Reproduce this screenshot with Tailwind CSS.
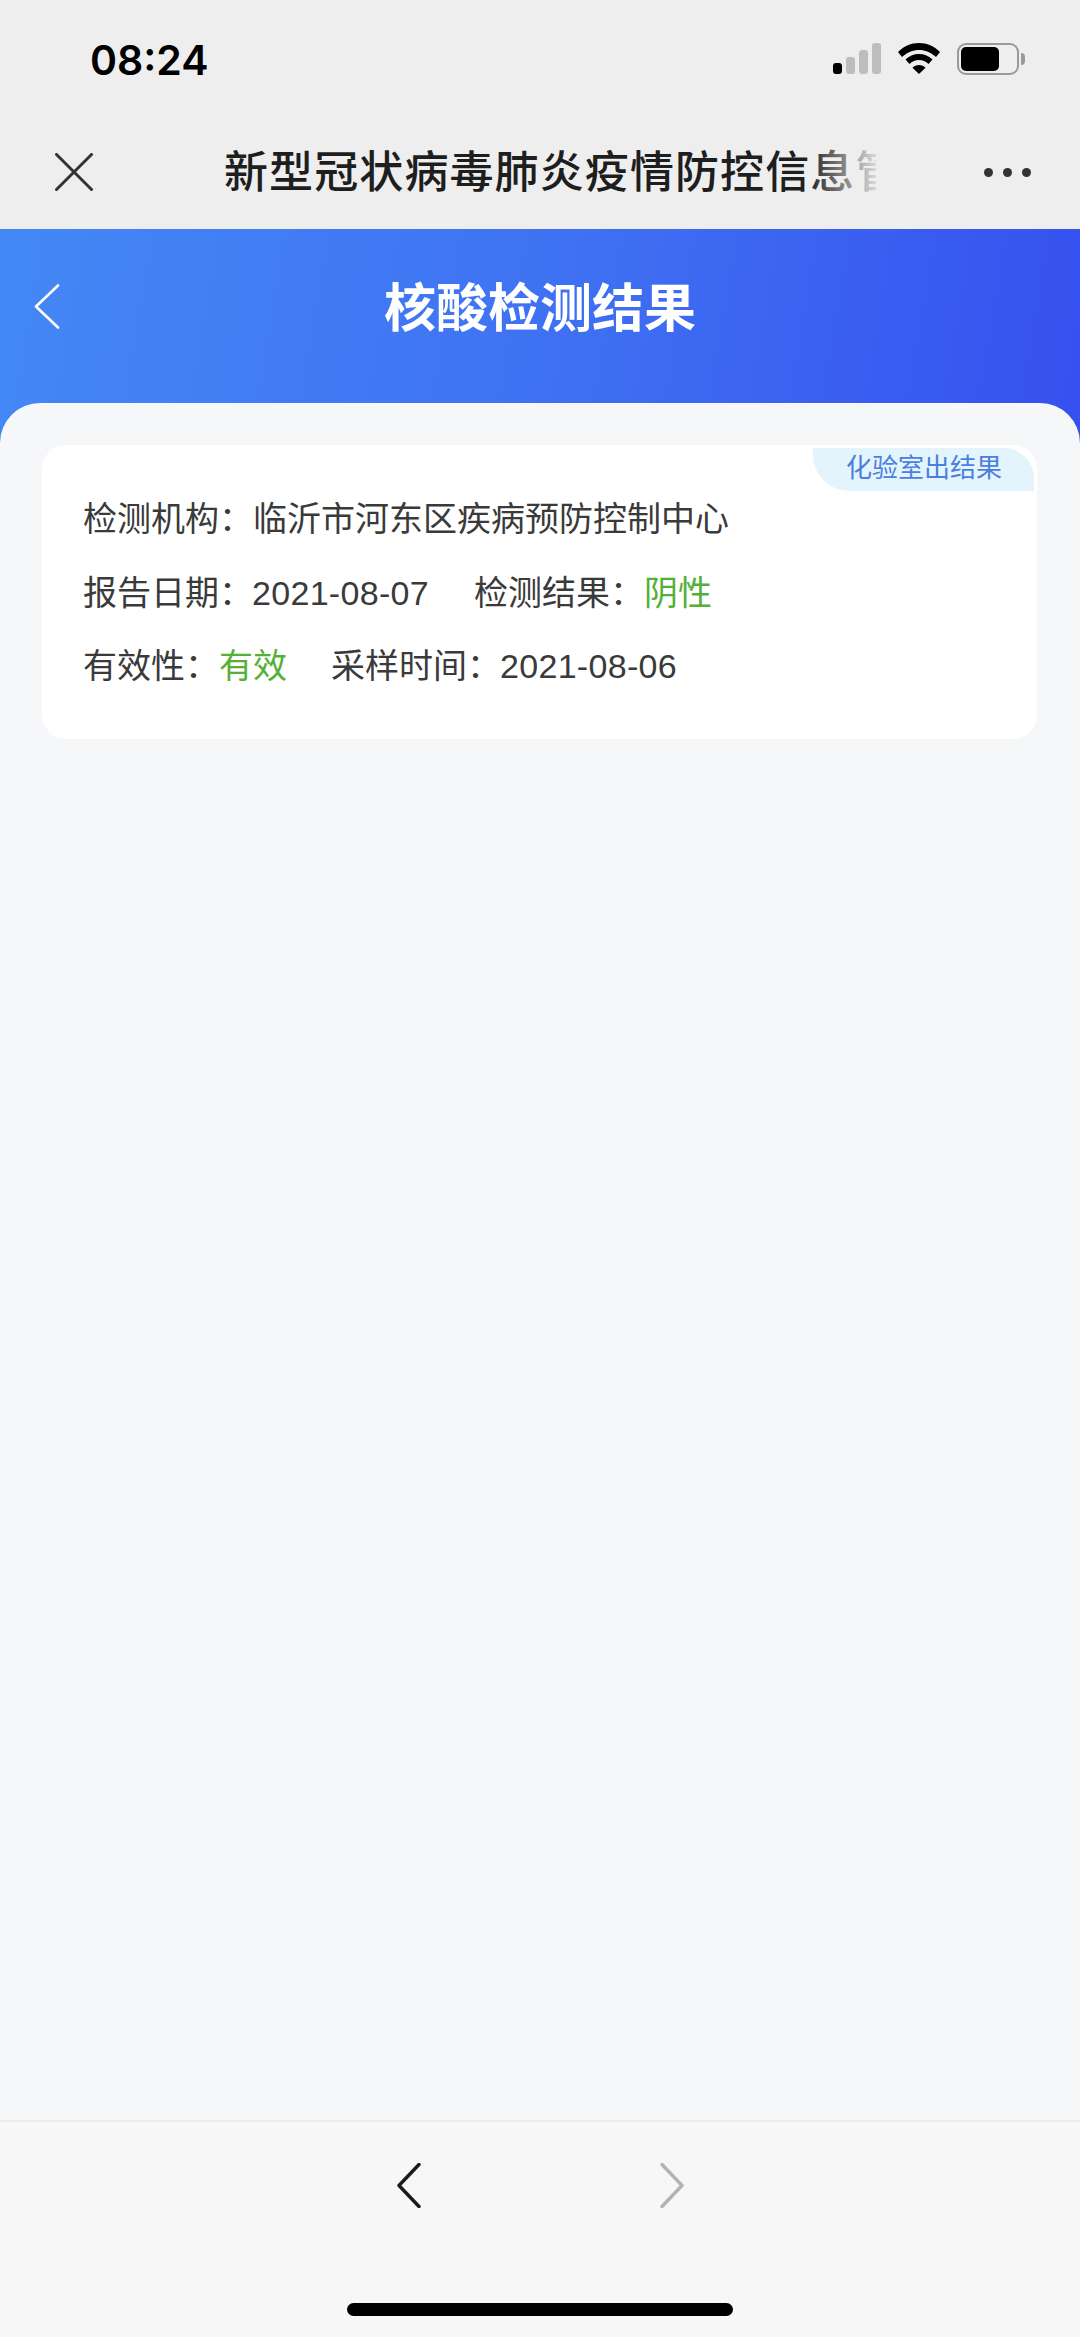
<!DOCTYPE html>
<html lang="zh-CN">
<head>
    <meta charset="UTF-8">
    <meta name="viewport" content="width=device-width, initial-scale=1.0">
    <title>核酸检测结果</title>
    <script src="https://cdn.jsdelivr.net/npm/@tailwindcss/browser@4"></script>
</head>
<body class="w-[1080px] h-[2337px] overflow-hidden flex flex-col bg-[#f5f7f9] font-['Liberation_Sans','Noto_Sans_CJK_SC',sans-serif]">

<!-- Status bar and webview title -->
<div class="h-[229px] flex-shrink-0 bg-[#eeeeee] flex flex-col">
    <div class="h-[112px] flex items-start pt-[35px] pl-[90px]">
        <span class="font-['Inter',sans-serif] font-semibold text-[41px] leading-[50px] text-black">08:24</span>
        <div class="ml-auto flex items-start pt-[8px] pr-[55px]">
            <div class="flex items-end gap-[4px] h-[31px]">
                <div class="w-[9px] h-[11px] rounded-[3px] bg-black"></div>
                <div class="w-[9px] h-[17px] rounded-[3px] bg-[#bdbdbd]"></div>
                <div class="w-[9px] h-[24px] rounded-[3px] bg-[#bdbdbd]"></div>
                <div class="w-[9px] h-[31px] rounded-[3px] bg-[#bdbdbd]"></div>
            </div>
            <svg class="ml-[17px]" width="42" height="31" viewBox="0 0 42 31">
                <path d="M21 0C13 0 6 3 0 9l4 5c5-4.500 11-7 17-7s12 2.500 17 7l4-5C36 3 29 0 21 0z" fill="#000"/>
                <path d="M21 11c-5.500 0-10 2-13.500 5.500l4 4.500c2.500-2.500 6-4 9.500-4s7 1.500 9.500 4l4-4.500C31 13 26.500 11 21 11z" fill="#000"/>
                <path d="M21 22c-2.500 0-4.800 1-6.500 2.700L21 31l6.500-6.300C25.800 23 23.500 22 21 22z" fill="#000"/>
            </svg>
            <div class="ml-[17px] flex items-center">
                <div class="w-[62px] h-[32px] rounded-[9px] border-[2.5px] border-[#9a9a9a] p-[2px]">
                    <div class="w-[38px] h-full rounded-[5px] bg-black"></div>
                </div>
                <div class="ml-[2px] w-[4px] h-[12px] rounded-r-full bg-[#9a9a9a]"></div>
            </div>
        </div>
    </div>
    <div class="h-[117px] flex items-start pt-[41px] pl-[55px]">
        <svg width="38" height="38" viewBox="0 0 38 38" fill="none" stroke="#333" stroke-width="3" stroke-linecap="round">
            <path d="M1.500 1.500l35 35M36.500 1.500l-35 35"/>
        </svg>
        <div class="relative ml-[131px] w-[652px] h-[60px] -mt-[10px] overflow-hidden whitespace-nowrap">
            <span class="font-medium text-[44px] leading-[60px] tracking-[1.100px] text-[#1e1e1e]">新型冠状病毒肺炎疫情防控信息管理系统</span>
            <div class="absolute top-0 right-0 w-[70px] h-full bg-gradient-to-r from-[#eeeeee]/0 to-[#eeeeee]/90"></div>
        </div>
        <div class="ml-auto flex gap-[10px] pt-[15px] pr-[49px]">
            <div class="w-[9px] h-[9px] rounded-full bg-[#333]"></div>
            <div class="w-[9px] h-[9px] rounded-full bg-[#333]"></div>
            <div class="w-[9px] h-[9px] rounded-full bg-[#333]"></div>
        </div>
    </div>
</div>

<!-- Blue page header -->
<header class="h-[214px] flex-shrink-0 flex items-start pt-[55px] pl-[34px] bg-[linear-gradient(100deg,#4488f6_0%,#3f72f2_50%,#3650ef_100%)] relative">
    <svg width="26" height="45" viewBox="0 0 26 45" fill="none" stroke="#fff" stroke-width="2.600" stroke-linecap="round" stroke-linejoin="round">
        <path d="M24 1.500L2 22.500l22 21"/>
    </svg>
    <h1 class="absolute left-0 right-0 top-[47px] text-center text-white font-bold text-[52px] leading-[66px]">核酸检测结果</h1>
</header>

<!-- Result panel -->
<main class="flex-1 -mt-[40px] relative rounded-t-[40px] bg-[#f5f7f9] border-t border-white/40 px-[42px] pt-[41px]">
    <div class="relative h-[294px] w-[995px] rounded-[24px] bg-white pl-[41px] pt-[38px] text-[34px] leading-[73.500px] text-[#3a3a3a]">
        <div class="absolute top-[3px] right-[3px] w-[221px] h-[43px] rounded-tr-[30px] rounded-bl-[36px] bg-[#e4f4fd] pl-[33px] text-[26px] leading-[40px] text-[#4a7fe0]">化验室出结果</div>
        <p>检测机构：临沂市河东区疾病预防控制中心</p>
        <p><span class="mr-[45px]">报告日期：<span class="-ml-[1px] tracking-[0.300px]">2021-08-07</span></span>检测结果：<span class="text-[#55b036]">阴性</span></p>
        <p><span class="mr-[44px]">有效性：<span class="text-[#55b036]">有效</span></span>采样时间：<span class="-ml-[1px] tracking-[0.300px]">2021-08-06</span></p>
    </div>
</main>

<!-- Browser toolbar -->
<footer class="h-[217px] flex-shrink-0 bg-[#f7f7f7] border-t-2 border-[#ebedf0] flex flex-col items-center pt-[41px]">
    <div class="flex gap-[239px]">
        <svg width="24" height="45" viewBox="0 0 24 45" fill="none" stroke="#1a1a1a" stroke-width="3.400" stroke-linecap="round" stroke-linejoin="round">
            <path d="M22 1.500L2 22.500l20 21"/>
        </svg>
        <svg width="24" height="45" viewBox="0 0 24 45" fill="none" stroke="#b3b3b3" stroke-width="3.400" stroke-linecap="round" stroke-linejoin="round">
            <path d="M2 1.500l20 21-20 21"/>
        </svg>
    </div>
    <div class="mt-[95px] w-[386px] h-[13px] rounded-full bg-black"></div>
</footer>

</body>
</html>
